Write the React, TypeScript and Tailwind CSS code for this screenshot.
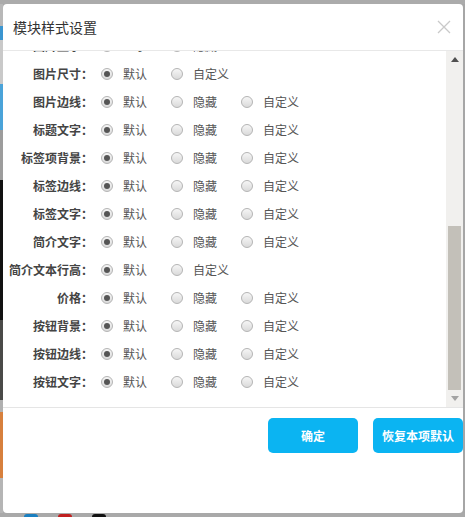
import React from "react";

type Row = { label: string; options: string[] };

const rows: Row[] = [
  { label: "图片显示：", options: ["显示", "隐藏"] },
  { label: "图片尺寸：", options: ["默认", "自定义"] },
  { label: "图片边线：", options: ["默认", "隐藏", "自定义"] },
  { label: "标题文字：", options: ["默认", "隐藏", "自定义"] },
  { label: "标签项背景：", options: ["默认", "隐藏", "自定义"] },
  { label: "标签边线：", options: ["默认", "隐藏", "自定义"] },
  { label: "标签文字：", options: ["默认", "隐藏", "自定义"] },
  { label: "简介文字：", options: ["默认", "隐藏", "自定义"] },
  { label: "简介文本行高：", options: ["默认", "自定义"] },
  { label: "价格：", options: ["默认", "隐藏", "自定义"] },
  { label: "按钮背景：", options: ["默认", "隐藏", "自定义"] },
  { label: "按钮边线：", options: ["默认", "隐藏", "自定义"] },
  { label: "按钮文字：", options: ["默认", "隐藏", "自定义"] },
];

function Radio({ checked }: { checked: boolean }) {
  return (
    <span className="flex h-[12px] w-[12px] shrink-0 items-center justify-center rounded-full border border-[#b4b4b4] bg-gradient-to-b from-[#f6f6f6] to-[#dadada]">
      {checked && <span className="h-[6px] w-[6px] rounded-full bg-[#555]" />}
    </span>
  );
}

function Scrollbar() {
  return (
    <div className="flex w-[17px] shrink-0 flex-col items-center bg-[#f1f0ee]">
      <div className="flex h-[17px] w-full items-center justify-center">
        <svg width="8" height="5" viewBox="0 0 8 5">
          <path d="M0 5 L4 0 L8 5 Z" fill="#505050" />
        </svg>
      </div>
      <div className="flex w-full flex-1 flex-col justify-end px-[2px]">
        <div className="h-[164px] w-full bg-[#c3c0b9]" />
      </div>
      <div className="flex h-[17px] w-full items-center justify-center">
        <svg width="8" height="5" viewBox="0 0 8 5">
          <path d="M0 0 L8 0 L4 5 Z" fill="#a3a3a3" />
        </svg>
      </div>
    </div>
  );
}

export default function App() {
  return (
    <div
      className="flex h-[517px] w-[465px] flex-col overflow-hidden bg-[#a9a9a9]"
      style={{ fontFamily: '"Noto Sans CJK SC", "Noto Sans", sans-serif' }}
    >
      <div className="h-[4px] shrink-0 bg-[#ababab]" />
      <div className="flex h-[509px] shrink-0">
        <div className="flex w-[3px] shrink-0 flex-col">
          <div className="h-[22px] bg-[#b8b8b8]" />
          <div className="h-[14px] bg-[#3b95d0]" />
          <div className="h-[44px] bg-[#c9c9c9]" />
          <div className="h-[46px] bg-[#4aa3d9]" />
          <div className="h-[50px] bg-[#9c9c9c]" />
          <div className="h-[140px] bg-[#111]" />
          <div className="h-[80px] bg-[#4a4a48]" />
          <div className="h-[12px] bg-[#b0b0b0]" />
          <div className="h-[66px] bg-[#d7803d]" />
          <div className="flex-1 bg-[#b5b5b5]" />
        </div>

        <div className="flex w-[460px] shrink-0 flex-col overflow-hidden rounded-[4px] bg-white">
          <div className="flex h-[47px] shrink-0 items-center justify-between border-b border-[#e8e8e8] pl-[10px] pr-[12px]">
            <span className="text-[14px] leading-none text-[#333]">模块样式设置</span>
            <svg width="14" height="14" viewBox="0 0 14 14" className="mb-[1px]">
              <path d="M1 1 L13 13 M13 1 L1 13" stroke="#c9c9c9" strokeWidth="1.3" />
            </svg>
          </div>

          <div className="flex h-[356px] shrink-0">
            <div className="flex flex-1 flex-col justify-end overflow-hidden pb-[11px]">
              {rows.map((row) => (
                <div key={row.label} className="flex h-[28px] shrink-0 items-center">
                  <span className="w-[90px] shrink-0 text-right text-[12px] font-bold leading-none text-[#444]">
                    {row.label}
                  </span>
                  <div className="ml-[8px] flex">
                    {row.options.map((opt, i) => (
                      <label key={opt} className="flex w-[70px] items-center">
                        <Radio checked={i === 0} />
                        <span className="ml-[10px] text-[12px] leading-none text-[#555]">{opt}</span>
                      </label>
                    ))}
                  </div>
                </div>
              ))}
            </div>
            <Scrollbar />
          </div>

          <div className="flex flex-1 justify-end gap-[15px] border-t border-[#e5e5e5] pt-[10px]">
            <button className="h-[35px] w-[90px] rounded-[5px] bg-[#0bb4f2] text-[12px] font-bold text-white">
              确定
            </button>
            <button className="h-[35px] w-[90px] rounded-[5px] bg-[#0bb4f2] text-[12px] font-bold text-white">
              恢复本项默认
            </button>
          </div>
        </div>

        <div className="flex-1 bg-[#a6a6a6]" />
      </div>
      <div className="flex h-[4px] shrink-0 items-end gap-[20px] pl-[24px]">
        <div className="h-[3px] w-[14px] rounded-t-full bg-[#1a7fc0]" />
        <div className="h-[3px] w-[14px] rounded-t-full bg-[#c0201f]" />
        <div className="h-[3px] w-[14px] rounded-t-full bg-[#111]" />
      </div>
    </div>
  );
}
